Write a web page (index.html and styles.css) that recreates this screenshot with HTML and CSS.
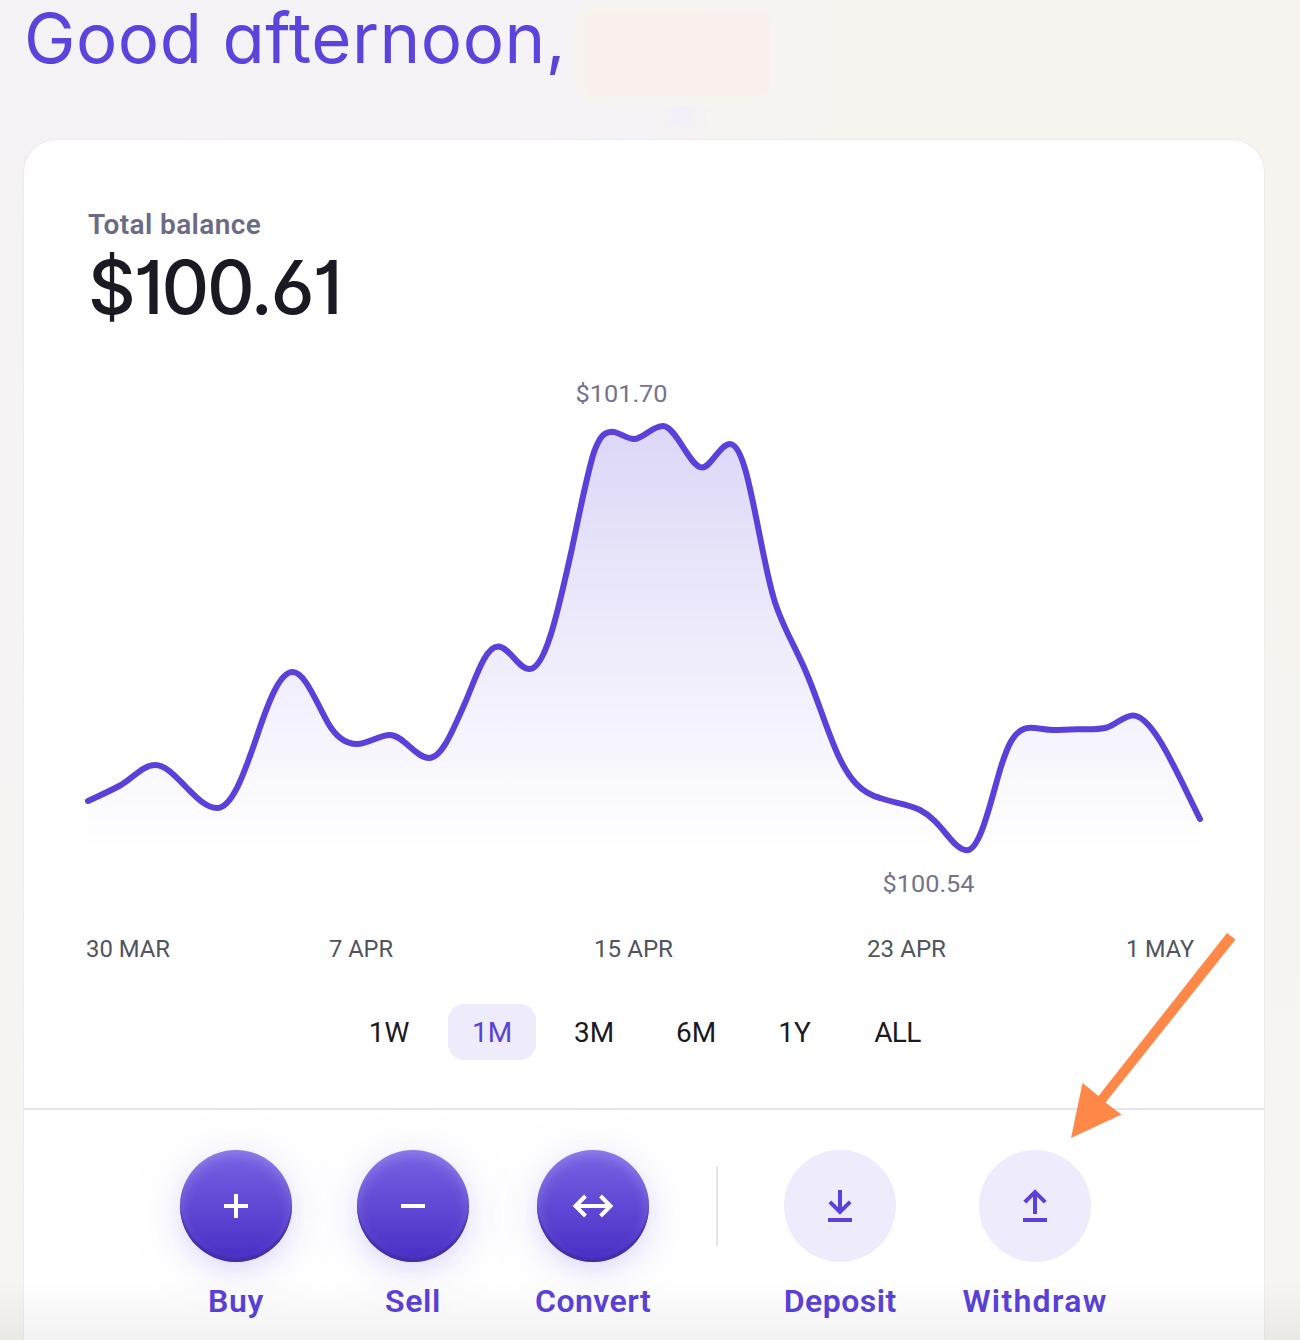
FILE: index.html
```html
<!DOCTYPE html>
<html lang="en">
<head>
<meta charset="utf-8">
<title>Dashboard</title>
<link rel="stylesheet" href="styles.css">
</head>
<body>
<div class="page">
  <header class="greeting">
    <h1>Good afternoon,</h1>
    <span class="glow"></span>
    <span class="name-mask"></span>
  </header>
  <main class="card">
    <section class="balance">
      <div class="balance-label">Total balance</div>
      <div class="balance-value">$100.61</div>
    </section>
    <section class="chart">
      <svg class="plot" width="1240" height="560" viewBox="24 370 1240 560">
        <defs>
          <linearGradient id="area" gradientUnits="userSpaceOnUse" x1="0" y1="426" x2="0" y2="850">
            <stop offset="0" stop-color="#5b41d9" stop-opacity=".21"/>
            <stop offset="1" stop-color="#5b41d9" stop-opacity="0"/>
          </linearGradient>
        </defs>
        <path fill="url(#area)" d="M88 801C99 796 110 791 121 785C133 778 143 765 155 765C166 765 176 777 186 787C196 797 206 808 217 808C232 808 244 774 256 739C267 706 279 672 292.5 672C305 672 316 702 328 723C336 737 346 744 357 744C368 744 379 735 390 735C403 735 416 758 429 758C442 758 453 730 465 703C475 680 485 646.5 498 646.5C510 647 518 669 529.5 669C546 669 559 606 571 553C579 516 586 478 594 452C600 436 604 432 612 431.7C619 431.7 626 439 634 439C643 439 652 426 663 426C676 426 690 467.5 702 467.5C711 467.5 720 444 730 444C742 444 750 487 758 527C763 552 768 579 774 599C781 624 795 646 806 672C817 697 827 731 838 755C850 781 862 793 880 798C894 803 908 804 920 810C942 821 953 850.3 967 850.3C980 850 990 804 1000 770C1007 747 1014 728 1030 727.7C1038 727.7 1044 730 1053 730C1061 730 1068 729.3 1077 729.3C1088 729.3 1098 730 1107 727.5C1117 724 1124 715.5 1133 715.5C1153 715.5 1177 773 1200 819V850H88Z"/>
        <path class="line" d="M88 801C99 796 110 791 121 785C133 778 143 765 155 765C166 765 176 777 186 787C196 797 206 808 217 808C232 808 244 774 256 739C267 706 279 672 292.5 672C305 672 316 702 328 723C336 737 346 744 357 744C368 744 379 735 390 735C403 735 416 758 429 758C442 758 453 730 465 703C475 680 485 646.5 498 646.5C510 647 518 669 529.5 669C546 669 559 606 571 553C579 516 586 478 594 452C600 436 604 432 612 431.7C619 431.7 626 439 634 439C643 439 652 426 663 426C676 426 690 467.5 702 467.5C711 467.5 720 444 730 444C742 444 750 487 758 527C763 552 768 579 774 599C781 624 795 646 806 672C817 697 827 731 838 755C850 781 862 793 880 798C894 803 908 804 920 810C942 821 953 850.3 967 850.3C980 850 990 804 1000 770C1007 747 1014 728 1030 727.7C1038 727.7 1044 730 1053 730C1061 730 1068 729.3 1077 729.3C1088 729.3 1098 730 1107 727.5C1117 724 1124 715.5 1133 715.5C1153 715.5 1177 773 1200 819"/>
        <text class="point" x="575.5" y="402" textLength="92" lengthAdjust="spacingAndGlyphs">$101.70</text>
        <text class="point" x="882.5" y="892" textLength="92" lengthAdjust="spacingAndGlyphs">$100.54</text>
      </svg>
      <svg class="axis" width="1240" height="50" viewBox="24 930 1240 50">
        <text x="86" y="957" textLength="84" lengthAdjust="spacingAndGlyphs">30 MAR</text>
        <text x="329" y="957" textLength="64" lengthAdjust="spacingAndGlyphs">7 APR</text>
        <text x="594" y="957" textLength="79" lengthAdjust="spacingAndGlyphs">15 APR</text>
        <text x="867" y="957" textLength="79" lengthAdjust="spacingAndGlyphs">23 APR</text>
        <text x="1126" y="957" textLength="68" lengthAdjust="spacingAndGlyphs">1 MAY</text>
      </svg>
    </section>
    <nav class="ranges">
      <span class="range w1">1W</span>
      <span class="range active">1M</span>
      <span class="range">3M</span>
      <span class="range">6M</span>
      <span class="range y1">1Y</span>
      <span class="range all">ALL</span>
    </nav>
    <section class="actions">
      <div class="action">
        <span class="disc primary"><svg width="48" height="48" viewBox="0 0 48 48"><path d="M24 12V36M12 24H36"/></svg></span>
        <span class="label buy">Buy</span>
      </div>
      <div class="action sell">
        <span class="disc primary"><svg width="48" height="48" viewBox="0 0 48 48"><path d="M12 24H36"/></svg></span>
        <span class="label buy">Sell</span>
      </div>
      <div class="action convert">
        <span class="disc primary"><svg width="48" height="48" viewBox="0 0 48 48"><path d="M7 24H41M16.500 14L6.500 24L16.500 34M31.500 14L41.500 24L31.500 34"/></svg></span>
        <span class="label">Convert</span>
      </div>
      <div class="divider"></div>
      <div class="action">
        <span class="disc"><svg width="48" height="48" viewBox="0 0 48 48"><path d="M24 8V30M13.800 19.800L24 30L34.200 19.800M12 38H36"/></svg></span>
        <span class="label">Deposit</span>
      </div>
      <div class="action withdraw">
        <span class="disc"><svg width="48" height="48" viewBox="0 0 48 48"><path d="M24 32V10M13.800 20.200L24 10L34.200 20.200M12 38H36"/></svg></span>
        <span class="label wide">Withdraw</span>
      </div>
    </section>
  </main>
  <div class="fade"></div>
  <svg class="pointer" width="170" height="210" viewBox="1068 930 170 210"><path d="M1227 933L1235.500 939.500L1105.500 1102.500L1121.500 1114.500L1071 1138L1082.500 1083L1098.500 1096Z"/></svg>
</div>
</body>
</html>
```
FILE: styles.css
```css
* { box-sizing: border-box; }
body { margin: 0; overflow: hidden; }
.page {
  position: relative;
  width: 1300px;
  height: 1340px;
  overflow: hidden;
  font-family: Roboto, "Noto Sans", sans-serif;
  background: linear-gradient(180deg, rgba(246,245,241,0) 10%, #f6f5f1 100%), linear-gradient(90deg, #f5f2f5 0%, #f6f2f7 46%, #f7f3f0 60%, #f7f3ef 100%);
}
.greeting {
  position: relative;
  height: 140px;
  padding-left: 24px;
}
h1 {
  margin: 0;
  font: 430 69px/76px Inter, sans-serif;
  font-feature-settings: "cv11";
  letter-spacing: .5px;
  color: #5b44dc;
  white-space: nowrap;
}
.name-mask {
  position: absolute;
  left: 574px;
  top: 2px;
  width: 206px;
  height: 104px;
  border: 10px solid #f7f3ef;
  border-radius: 22px;
  background: #f9f0ee;
  filter: blur(1px);
}
.glow {
  position: absolute;
  left: 668px;
  top: 104px;
  width: 26px;
  height: 22px;
  background: #f1eff9;
  filter: blur(6px);
}
.card {
  width: 1240px;
  height: 1240px;
  margin-left: 24px;
  border-radius: 32px;
  background: #fff;
  box-shadow: 0 0 2px rgba(40,30,80,.12);
}
.balance { height: 230px; padding: 67px 0 0 64px; }
.balance-label {
  font-size: 28px;
  line-height: 36px;
  font-weight: 600;
  letter-spacing: .4px;
  color: #6b6b86;
}
.balance-value {
  font: 550 74px/88px Inter, sans-serif;
  font-feature-settings: "cv01", "cv03", "cv10";
  letter-spacing: -2.2px;
  color: #1b1a23;
}
.chart { height: 634px; }
.plot, .axis { display: block; }
.line {
  fill: none;
  stroke: #5b41d9;
  stroke-width: 6;
  stroke-linecap: round;
  stroke-linejoin: round;
}
.point { font-size: 24px; fill: #74748f; }
.axis text { font-size: 24px; fill: #4f5560; }
.ranges {
  display: flex;
  padding-left: 320px;
  gap: 14px;
  height: 104px;
}
.range {
  width: 88px;
  height: 56px;
  border-radius: 16px;
  font-size: 28px;
  line-height: 58px;
  text-align: center;
  color: #1b1a23;
}
.range.w1 { width: 90px; }
.range.y1 { width: 81px; }
.range.all { width: 97px; letter-spacing: -.6px; }
.range.active { background: #eeebfc; color: #5b41d9; }
.actions {
  display: flex;
  justify-content: center;
  gap: 65.8px;
  padding-top: 40px;
  border-top: 2px solid #e5e4ea;
}
.action {
  width: 112px;
  display: flex;
  flex-direction: column;
  align-items: center;
}
.action.sell { margin: 0 .8px 0 -.8px; }
.action.convert { width: 115px; }
.action.withdraw { width: 146px; }
.disc {
  width: 112px;
  height: 112px;
  border-radius: 50%;
  display: flex;
  align-items: center;
  justify-content: center;
  background: #eeebfc;
}
.disc path { fill: none; stroke: #5b41d9; stroke-width: 4; }
.disc.primary {
  background: linear-gradient(#7862e4, #4a2dc5);
  box-shadow: inset 0 -4px 2px rgba(65,45,165,.85), inset 0 4px 14px rgba(255,255,255,.22), 0 8px 28px rgba(91,65,217,.17), 0 8px 80px rgba(91,65,217,.06);
}
.disc.primary path { stroke: #fff; }
.label {
  margin-top: 19px;
  font-size: 32px;
  line-height: 40px;
  font-weight: 600;
  letter-spacing: .45px;
  color: #5b41d9;
  white-space: nowrap;
}
.label.buy { letter-spacing: .7px; }
.label.wide { letter-spacing: 1.3px; }
.divider { width: 2px; height: 80px; margin-top: 16px; background: #e5e4ea; }
.fade {
  position: absolute;
  left: 0;
  right: 0;
  bottom: 0;
  height: 60px;
  background: linear-gradient(rgba(0,0,0,0), rgba(0,0,0,.05));
}
.pointer { position: absolute; left: 1068px; top: 930px; fill: #ff8748; }
```
